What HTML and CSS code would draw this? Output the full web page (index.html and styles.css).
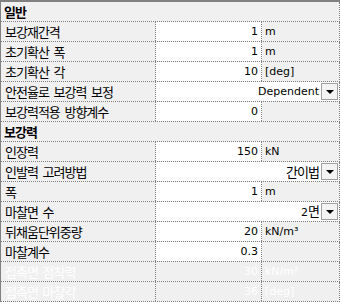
FILE: index.html
```html
<!DOCTYPE html>
<html lang="ko">
<head>
<meta charset="utf-8">
<link rel="stylesheet" href="styles.css">
</head>
<body>
<div class="grid">
  <div class="row head"><div class="cell label">일반</div></div>
  <div class="row"><div class="cell label">보강재간격</div><div class="cell val">1</div><div class="cell unit">m</div></div>
  <div class="row"><div class="cell label">초기확산 폭</div><div class="cell val">1</div><div class="cell unit">m</div></div>
  <div class="row"><div class="cell label">초기확산 각</div><div class="cell val">10</div><div class="cell unit">[deg]</div></div>
  <div class="row"><div class="cell label">안전율로 보강력 보정</div><div class="cell combo"><span class="ctext">Dependent</span><span class="btn"><i class="tri"></i></span></div></div>
  <div class="row"><div class="cell label">보강력적용 방향계수</div><div class="cell val">0</div><div class="cell unit"></div></div>
  <div class="row head"><div class="cell label">보강력</div></div>
  <div class="row"><div class="cell label">인장력</div><div class="cell val">150</div><div class="cell unit">kN</div></div>
  <div class="row"><div class="cell label">인발력 고려방법</div><div class="cell combo"><span class="ctext kr">간이법</span><span class="btn"><i class="tri"></i></span></div></div>
  <div class="row"><div class="cell label">폭</div><div class="cell val">1</div><div class="cell unit">m</div></div>
  <div class="row"><div class="cell label">마찰면 수</div><div class="cell combo"><span class="ctext">2<span class="kr">면</span></span><span class="btn"><i class="tri"></i></span></div></div>
  <div class="row"><div class="cell label">뒤채움단위중량</div><div class="cell val">20</div><div class="cell unit">kN/m³</div></div>
  <div class="row"><div class="cell label">마찰계수</div><div class="cell val">0.3</div><div class="cell unit"></div></div>
  <div class="row off"><div class="cell label">접촉면 점착력</div><div class="cell val">30</div><div class="cell unit">kN/m²</div></div>
  <div class="row off"><div class="cell label">접촉면 마찰각</div><div class="cell val">36</div><div class="cell unit">[deg]</div></div>
</div>
</body>
</html>
```

FILE: styles.css
```css
html, body {
  margin: 0;
  padding: 0;
  background: #f0f0f0;
}
.grid {
  width: 340px;
  height: 302px;
  box-sizing: border-box;
  border-top: 2px solid #808080;
  border-left: 1px solid #808080;
  background: #f0f0f0;
  color: #000;
}
.row {
  display: grid;
  grid-template-columns: 155px 106px 1fr;
  height: 20px;
  box-sizing: border-box;
  border-bottom: 1px dotted #808080;
  border-right: 1px dotted #808080;
}
.cell {
  box-sizing: border-box;
  height: 19px;
  line-height: 19px;
  white-space: nowrap;
  overflow: hidden;
}
.label {
  font-family: "Noto Sans CJK KR", sans-serif;
  font-size: 13px;
  letter-spacing: -1px;
  word-spacing: 2px;
  padding-left: 4px;
  background: #f0f0f0;
  border-right: 1px dotted #808080;
}
.head .label {
  grid-column: 1 / -1;
  border-right: none;
  font-weight: bold;
  padding-left: 3px;
}
.val {
  font-family: "DejaVu Sans", "Noto Sans CJK KR", sans-serif;
  font-size: 11px;
  text-align: right;
  padding-right: 3px;
  background: #fff;
  border-right: 1px dotted #808080;
}
.unit {
  font-family: "DejaVu Sans", "Noto Sans CJK KR", sans-serif;
  font-size: 11px;
  padding-left: 3px;
  background: #f0f0f0;
}
.combo {
  grid-column: 2 / 4;
  background: #fff;
  display: flex;
  justify-content: flex-end;
  align-items: center;
  gap: 2px;
  padding-right: 1px;
  font-family: "DejaVu Sans", "Noto Sans CJK KR", sans-serif;
  font-size: 11px;
}
.kr {
  font-family: "Noto Sans CJK KR", sans-serif;
  font-size: 13px;
  letter-spacing: -1px;
}
.btn {
  width: 17px;
  height: 17px;
  box-sizing: border-box;
  border: 1px solid #a0a0a0;
  background: #f4f4f4;
  display: flex;
  align-items: center;
  justify-content: center;
}
.tri {
  width: 0;
  height: 0;
  border-left: 4px solid transparent;
  border-right: 4px solid transparent;
  border-top: 4px solid #000;
}
.off .label,
.off .val,
.off .unit {
  color: #fff;
  background: #f0f0f0;
}
```
